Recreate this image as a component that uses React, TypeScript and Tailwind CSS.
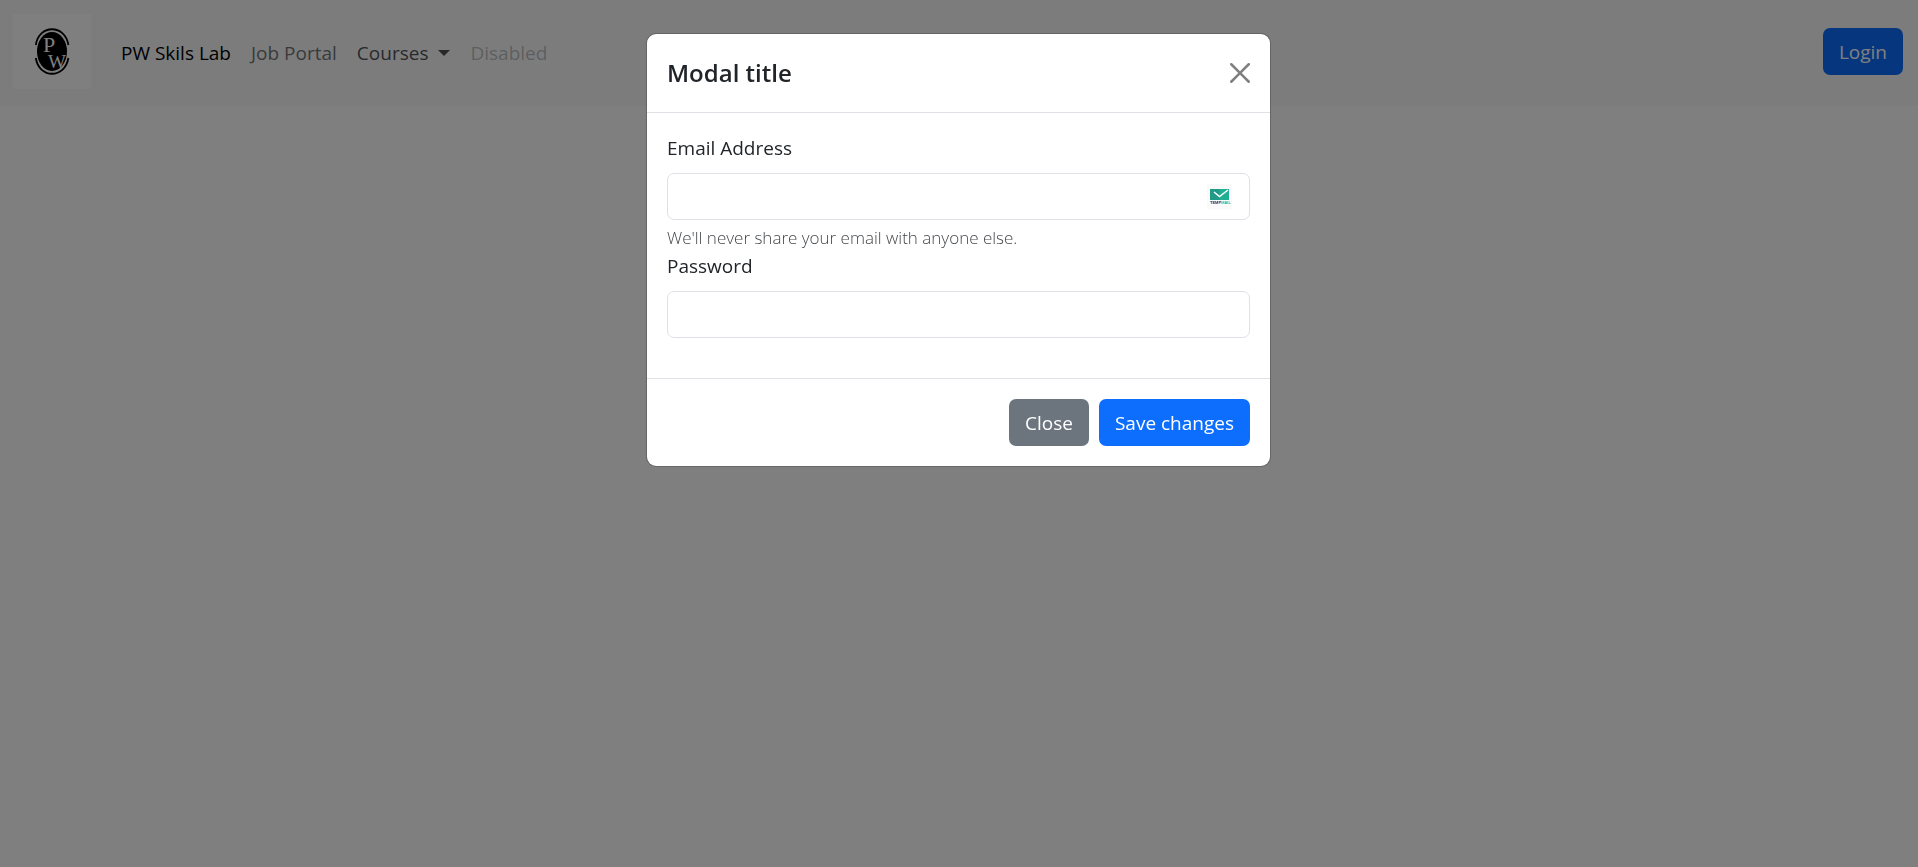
import React from "react";

function Logo() {
  return (
    <svg viewBox="0 0 78 75" className="h-[75px] w-[78px] bg-white" role="img" aria-label="PW">
      <ellipse cx="39" cy="37.5" rx="15" ry="19.5" fill="#000" />
      <path d="M22.8 31 C26 10 52 10 55.4 31" fill="none" stroke="#000" strokeWidth="1.8" />
      <path d="M22.8 44 C26 65 52 65 55.4 44" fill="none" stroke="#000" strokeWidth="1.8" />
      <text fontFamily="Liberation Serif, serif" fontSize="19" fill="#fff">
        <tspan x="30" y="37.5" fontSize="22">P</tspan>
        <tspan x="35" y="53.5">W</tspan>
      </text>
    </svg>
  );
}

function TempMailIcon() {
  return (
    <svg viewBox="0 0 25 25" className="h-[25px] w-[25px]" aria-hidden="true">
      <rect width="25" height="25" rx="2" fill="#fafafa" />
      <rect x="3" y="5" width="19" height="11" fill="#1fb094" />
      <path d="M3 5h9.5v11H3z" fill="#219a88" />
      <path d="M7 8l5.5 4.5L21 6" fill="none" stroke="#fff" strokeWidth="1.5" />
      <text x="3" y="20" fontFamily="Liberation Sans, sans-serif" fontWeight="700" fontSize="4" fill="#1c2b4a">
        TEMP<tspan fill="#1fb899">MAIL</tspan>
      </text>
    </svg>
  );
}

const control =
  "block h-[47px] w-full rounded-[7px] border border-[#dee2e6] bg-white px-4 outline-none";
const button = "h-[47px] rounded-[7px] px-4 text-white";

export default function App() {
  return (
    <div className="min-h-screen bg-white font-['Open_Sans','Noto_Sans',sans-serif] text-[19px] leading-[30px] text-[#212529]">
      <nav className="flex items-center bg-[#f8f9fa] pt-[14px] pr-[15px] pb-[17px] pl-[13px]">
        <a href="#" className="mr-5 block">
          <Logo />
        </a>
        <ul className="flex flex-1 items-center pt-0.5">
          <li>
            <a href="#" className="px-2.5 text-black">PW Skils Lab</a>
          </li>
          <li>
            <a href="#" className="px-2.5 text-[#212529]/65">Job Portal</a>
          </li>
          <li>
            <a href="#" className="flex items-center px-2.5 text-[#212529]/80">
              Courses
              <svg viewBox="0 0 12 6" className="ml-2.5 h-1.5 w-3" aria-hidden="true">
                <path d="M0 0h12L6 6z" fill="#212529" fillOpacity="0.8" />
              </svg>
            </a>
          </li>
          <li>
            <a href="#" aria-disabled="true" className="px-2.5 text-[#212529]/30">Disabled</a>
          </li>
        </ul>
        <button type="button" className={`${button} bg-[#0d6efd]`}>Login</button>
      </nav>

      <div className="fixed inset-0 flex items-start justify-center bg-black/50 pt-[33px] pr-px">
        <div
          role="dialog"
          aria-modal="true"
          aria-labelledby="modal-title"
          className="w-full max-w-[625px] rounded-[10px] border border-black/20 bg-white bg-clip-padding"
        >
          <div className="flex items-center justify-between border-b border-[#dee2e6] p-5">
            <h1 id="modal-title" className="text-[24px] leading-[38px] font-semibold">Modal title</h1>
            <button type="button" aria-label="Close dialog">
              <svg viewBox="0 0 16 16" className="h-5 w-5" fill="#000" fillOpacity="0.5">
                <path d="M.293.293a1 1 0 0 1 1.414 0L8 6.586 14.293.293a1 1 0 1 1 1.414 1.414L9.414 8l6.293 6.293a1 1 0 0 1-1.414 1.414L8 9.414l-6.293 6.293a1 1 0 0 1-1.414-1.414L6.586 8 .293 1.707a1 1 0 0 1 0-1.414z" />
              </svg>
            </button>
          </div>
          <form>
            <div className="px-5 pt-5 pb-10">
              <label htmlFor="email" className="mb-2.5 block">Email Address</label>
              <div className="relative">
                <input id="email" type="email" aria-describedby="email-help" className={control} />
                <span className="absolute inset-y-0 right-[18px] flex items-center">
                  <TempMailIcon />
                </span>
              </div>
              <p id="email-help" className="mt-[5px] text-[17px] leading-[26px] font-light text-[#212529]/85">
                We'll never share your email with anyone else.
              </p>
              <label htmlFor="password" className="mb-2.5 block">Password</label>
              <input id="password" type="password" className={control} />
            </div>
            <div className="flex justify-end gap-2.5 border-t border-[#dee2e6] p-5">
              <button type="button" className={`${button} bg-[#6c757d]`}>Close</button>
              <button type="button" className={`${button} bg-[#0d6efd]`}>Save changes</button>
            </div>
          </form>
        </div>
      </div>
    </div>
  );
}
